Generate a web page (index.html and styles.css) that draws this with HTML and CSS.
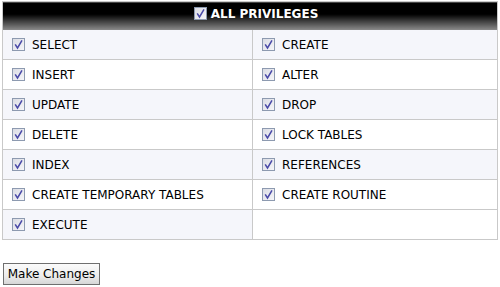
FILE: index.html
```html
<!DOCTYPE html>
<html>
<head>
<meta charset="utf-8">
<link rel="stylesheet" href="styles.css">
</head>
<body>
<svg class="defs" width="0" height="0" aria-hidden="true">
  <defs>
    <linearGradient id="cbfill" x1="0" y1="0" x2="1" y2="1">
      <stop offset="0" stop-color="#d9dbe3"/>
      <stop offset="1" stop-color="#f7f7fa"/>
    </linearGradient>
    <symbol id="cb" viewBox="0 0 13 13">
      <rect x="0.5" y="0.5" width="12" height="12" fill="url(#cbfill)" stroke="#8d9ab0"/>
      <path d="M3.2 6.4 L5.5 10 L10 2.4" fill="none" stroke="#4a4aa8" stroke-width="1.5" stroke-linejoin="miter"/>
    </symbol>
  </defs>
</svg>
<div class="wrap">
  <table class="priv">
    <colgroup>
      <col class="col1">
      <col class="col2">
    </colgroup>
    <thead>
      <tr>
        <th colspan="2" class="head">
          <span class="head-in"><svg class="cb"><use href="#cb"/></svg>ALL PRIVILEGES</span>
        </th>
      </tr>
    </thead>
    <tbody>
      <tr class="odd">
        <td><span class="item"><svg class="cb"><use href="#cb"/></svg>SELECT</span></td>
        <td><span class="item"><svg class="cb"><use href="#cb"/></svg>CREATE</span></td>
      </tr>
      <tr class="even">
        <td><span class="item"><svg class="cb"><use href="#cb"/></svg>INSERT</span></td>
        <td><span class="item"><svg class="cb"><use href="#cb"/></svg>ALTER</span></td>
      </tr>
      <tr class="odd">
        <td><span class="item"><svg class="cb"><use href="#cb"/></svg>UPDATE</span></td>
        <td><span class="item"><svg class="cb"><use href="#cb"/></svg>DROP</span></td>
      </tr>
      <tr class="even">
        <td><span class="item"><svg class="cb"><use href="#cb"/></svg>DELETE</span></td>
        <td><span class="item"><svg class="cb"><use href="#cb"/></svg>LOCK TABLES</span></td>
      </tr>
      <tr class="odd">
        <td><span class="item"><svg class="cb"><use href="#cb"/></svg>INDEX</span></td>
        <td><span class="item"><svg class="cb"><use href="#cb"/></svg>REFERENCES</span></td>
      </tr>
      <tr class="even">
        <td><span class="item"><svg class="cb"><use href="#cb"/></svg>CREATE TEMPORARY TABLES</span></td>
        <td><span class="item"><svg class="cb"><use href="#cb"/></svg>CREATE ROUTINE</span></td>
      </tr>
      <tr class="odd">
        <td><span class="item"><svg class="cb"><use href="#cb"/></svg>EXECUTE</span></td>
        <td class="blank"></td>
      </tr>
    </tbody>
  </table>
  <button class="btn" type="button">Make Changes</button>
</div>
</body>
</html>
```

FILE: styles.css
```css
html, body {
  margin: 0;
  padding: 0;
  background: #ffffff;
}
body {
  font-family: "DejaVu Sans", Verdana, sans-serif;
  font-size: 12px;
  color: #000000;
}
.defs {
  position: absolute;
  width: 0;
  height: 0;
  overflow: hidden;
}
.wrap {
  padding: 1px 0 0 2px;
}
.priv {
  width: 495px;
  border-collapse: collapse;
  border: 1px solid #c9c9c9;
  table-layout: fixed;
}
.col1 {
  width: 250px;
}
.col2 {
  width: 245px;
}
.head {
  height: 28px;
  padding: 0;
  background: linear-gradient(to bottom, #000000 0%, #000000 42%, #3a3a3a 65%, #8e8e8e 100%);
  color: #ffffff;
  font-weight: bold;
  font-size: 12px;
  text-align: center;
  vertical-align: middle;
}
.head-in {
  display: inline-flex;
  align-items: center;
  gap: 4px;
  margin-left: 12px;
  position: relative;
  top: -1px;
}
.priv td {
  height: 29px;
  padding: 0 0 0 9px;
  border: 1px solid #c9c9c9;
  vertical-align: middle;
}
.priv tbody tr:first-child td {
  border-top: none;
}
.odd td {
  background: #f5f6fb;
}
.even td {
  background: #ffffff;
}
.odd td.blank {
  background: #ffffff;
}
.item {
  display: flex;
  align-items: center;
  gap: 7px;
}
.cb {
  width: 13px;
  height: 13px;
  flex: none;
  display: block;
}
.btn {
  display: block;
  margin: 23px 0 0 1px;
  width: 97px;
  height: 22px;
  padding: 0 3px;
  font-family: "DejaVu Sans", Verdana, sans-serif;
  font-size: 12px;
  color: #000000;
  border: 1px solid #6f6f6f;
  border-radius: 0;
  background: linear-gradient(to bottom, #fbfbfb 0%, #ececec 60%, #d6d6d6 100%);
  white-space: nowrap;
}
```
